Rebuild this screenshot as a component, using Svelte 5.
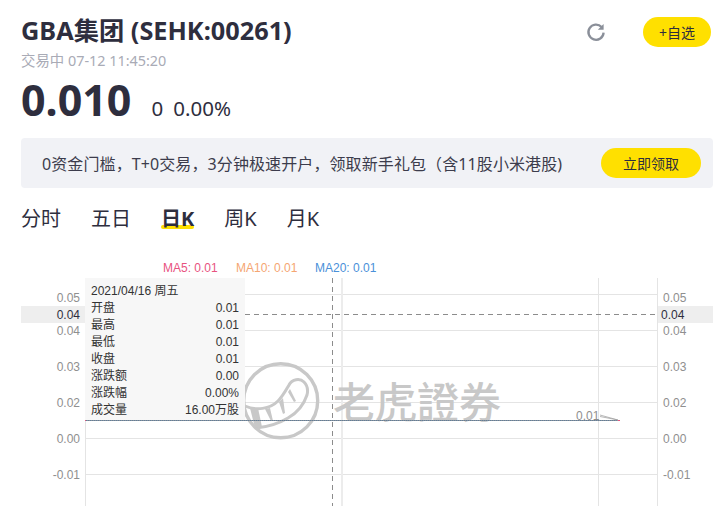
<script>
  const periods = ['分时', '五日', '日K', '周K', '月K'];
  const activePeriod = '日K';

  const maLegend = [
    { label: 'MA5: 0.01', x: 163, color: '#e8537f' },
    { label: 'MA10: 0.01', x: 236, color: '#f5a672' },
    { label: 'MA20: 0.01', x: 315, color: '#4a90d9' },
  ];

  const ticks = [
    { label: '0.05', y: 294, labelY: 302 },
    { label: '0.04', y: 330, labelY: 335 },
    { label: '0.03', y: 366, labelY: 371 },
    { label: '0.02', y: 402, labelY: 407 },
    { label: '0.00', y: 438, labelY: 443 },
    { label: '-0.01', y: 474, labelY: 479 },
  ];

  const tooltipRows = [
    ['开盘', '0.01'],
    ['最高', '0.01'],
    ['最低', '0.01'],
    ['收盘', '0.01'],
    ['涨跌额', '0.00'],
    ['涨跌幅', '0.00%'],
    ['成交量', '16.00万股'],
  ];
</script>

<div class="page">
  <header class="top">
    <div class="quote">
      <h1>GBA集团 (SEHK:00261)</h1>
      <div class="status">交易中 07-12 11:45:20</div>
      <div class="price-row">
        <span class="price">0.010</span>
        <span class="change">0</span>
        <span class="change">0.00%</span>
      </div>
    </div>
    <div class="actions">
      <svg class="refresh" viewBox="0 0 20 20" width="20" height="20">
        <path d="M15.6 5A7.6 7.6 0 1 0 17.6 10.6" fill="none" stroke="#8a8f99" stroke-width="2.3" />
        <path d="M17.6 2V7.8H11.8Z" fill="#8a8f99" />
      </svg>
      <button class="watch">+自选</button>
    </div>
  </header>

  <div class="promo">
    <span>0资金门槛，T+0交易，3分钟极速开户，领取新手礼包（含11股小米港股)</span>
    <button class="claim">立即领取</button>
  </div>

  <nav class="tabs">
    {#each periods as p}
      <span class="tab" class:active={p === activePeriod}>{p}</span>
    {/each}
  </nav>

  <div class="chart">
    <svg class="plot" width="713" height="506" viewBox="0 0 713 506">
      <rect x="21" y="306" width="64" height="17" fill="#eeeeee" />
      <rect x="658" y="306" width="55" height="17" fill="#eeeeee" />

      {#each ticks as t}
        <line x1="85" x2="657" y1={t.y + 0.5} y2={t.y + 0.5} class="grid" />
      {/each}
      <line x1="85.5" x2="85.5" y1="278" y2="506" class="grid" />
      <line x1="342" x2="342" y1="278" y2="506" class="grid wide" />
      <line x1="598.5" x2="598.5" y1="278" y2="506" class="grid" />
      <line x1="657.5" x2="657.5" y1="278" y2="506" class="grid" />

      <!-- watermark -->
      <g class="mark">
        <circle cx="280.7" cy="400.7" r="37" fill="none" stroke="#c8c8c8" stroke-width="3.4" />
        <path
          d="M245 406C256 411 270 409 278 401C283 396 286 390 289 385C292 379 300 378 304 382C308 386 308 391 307 395C304 404 297 413 288 418C278 424 267 427 256 428"
          fill="none"
          stroke="#c8c8c8"
          stroke-width="3"
        />
        <path d="M250 408L258 408L262 427L255 428Z" fill="#c8c8c8" />
        <path d="M265 409L270 408L273 421L271 421Z" fill="#c8c8c8" />
        <path d="M279 402L283 398L285 413L283 414Z" fill="#c8c8c8" />
        <path d="M288 392L290 389L296 401L294 402Z" fill="#c8c8c8" />
      </g>
      <text x="333" y="418" class="mark-text">老虎證券</text>

      <line x1="85" x2="619" y1="420.5" y2="420.5" stroke="#5f7f99" stroke-width="1.2" />
      <line x1="85" x2="619" y1="420.5" y2="420.5" stroke="#8a8f99" stroke-width="1" stroke-dasharray="1 1" />
      <rect x="85" y="420" width="1" height="1" fill="#e8537f" />
      <rect x="618" y="420" width="2" height="1" fill="#e8537f" />

      <path d="M600 415L618 420L600 416.5" fill="none" stroke="#999" stroke-width="0.7" />
      <text x="576" y="420" class="tick">0.01</text>

      {#each maLegend as m}
        <text x={m.x} y="272" class="legend" fill={m.color}>{m.label}</text>
      {/each}

      {#each ticks as t}
        <text x="80" y={t.labelY} text-anchor="end" class="tick">{t.label}</text>
        <text x="663" y={t.labelY} class="tick">{t.label}</text>
      {/each}
      <text x="80" y="319" text-anchor="end" class="tick strong">0.04</text>
      <text x="661" y="319" class="tick strong">0.04</text>

      <line x1="245" x2="657" y1="314.5" y2="314.5" class="cross" />
      <line x1="332.5" x2="332.5" y1="278" y2="506" class="cross" />
    </svg>

    <div class="tooltip">
      <div class="date">2021/04/16 周五</div>
      {#each tooltipRows as row}
        <div class="row"><span>{row[0]}</span><span>{row[1]}</span></div>
      {/each}
    </div>
  </div>
</div>

<style>
  :global(body) {
    margin: 0;
    background: #fff;
    overflow: hidden;
  }

  .page {
    position: relative;
    width: 713px;
    height: 506px;
    overflow: hidden;
    font-family: "Noto Sans", "Noto Sans CJK SC", sans-serif;
    color: #2e2e3e;
  }

  .top {
    display: flex;
    justify-content: space-between;
    padding: 13px 2px 0 21px;
  }

  h1 {
    margin: 0;
    font-size: 25.3px;
    line-height: 34px;
    font-weight: 700;
  }

  .status {
    margin-top: 4px;
    font-size: 14.4px;
    line-height: 20px;
    color: #a9abb6;
  }

  .price-row {
    display: flex;
    align-items: baseline;
    height: 50px;
    margin-top: 4px;
  }

  .price {
    font-size: 43px;
    line-height: 50px;
    font-weight: 700;
    margin-right: 20px;
  }

  .change {
    font-size: 20.5px;
    margin-right: 10px;
  }

  .actions {
    display: flex;
    align-items: center;
    gap: 37px;
    height: 30px;
    margin-top: 4px;
  }

  .refresh {
    display: block;
  }

  button {
    border: 0;
    padding: 0;
    background: #ffe000;
    color: #2e2e3e;
    font-family: inherit;
  }

  .watch {
    width: 68px;
    height: 30px;
    border-radius: 15px;
    font-size: 14px;
  }

  .promo {
    display: flex;
    align-items: center;
    justify-content: space-between;
    box-sizing: border-box;
    width: 692px;
    height: 50px;
    margin: 13px 0 0 21px;
    padding: 0 12px 0 21px;
    border-radius: 4px;
    background: #f1f2f6;
    font-size: 16px;
    letter-spacing: 0.1px;
    color: #3c3c4c;
  }

  .claim {
    width: 100px;
    height: 30px;
    border-radius: 15px;
    font-size: 14px;
  }

  .tabs {
    display: flex;
    gap: 30px;
    margin: 18px 0 0 21px;
    font-size: 20px;
    line-height: 26px;
  }

  .tab {
    position: relative;
    z-index: 0;
  }

  .tab.active {
    font-weight: 700;
  }

  .tab.active::after {
    content: '';
    position: absolute;
    z-index: -1;
    left: 0;
    right: 0;
    bottom: 3px;
    height: 4px;
    border-radius: 2px;
    background: #ffe000;
  }

  .chart {
    position: absolute;
    inset: 0;
    pointer-events: none;
  }

  .plot {
    display: block;
  }

  .grid {
    stroke: #e4e4e4;
    stroke-width: 1;
  }

  .grid.wide {
    stroke: #ececec;
    stroke-width: 2;
  }

  .cross {
    stroke: #8c8c8c;
    stroke-width: 1;
    stroke-dasharray: 5 4;
  }

  .tick {
    font-family: "Liberation Sans", sans-serif;
    font-size: 12px;
    fill: #8f8f8f;
  }

  .tick.strong {
    fill: #2e2e3e;
  }

  .legend {
    font-family: "Liberation Sans", sans-serif;
    font-size: 12px;
  }

  .mark-text {
    font-family: "Noto Sans CJK TC", sans-serif;
    font-size: 42px;
    font-weight: 500;
    fill: #c8c8c8;
  }

  .tooltip {
    position: absolute;
    left: 85px;
    top: 278px;
    box-sizing: border-box;
    width: 160px;
    height: 142px;
    padding: 5px 6px 0;
    background: #f7f7f7;
    font-family: "Liberation Sans", "Noto Sans CJK SC", sans-serif;
    font-size: 12px;
    line-height: 17px;
    color: #333;
  }

  .row {
    display: flex;
    justify-content: space-between;
  }
</style>
